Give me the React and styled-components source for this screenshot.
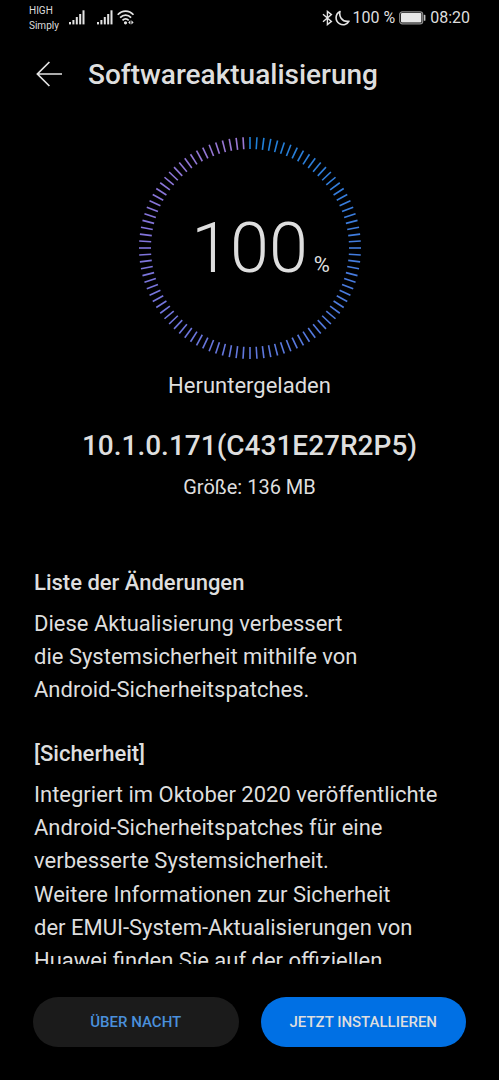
import styled, { createGlobalStyle } from "styled-components";

const COLORS = {
  background: "#000000",
  text: "#dedede",
  accent: "#4a90dc",
  primary: "#0070e4",
  secondary: "#1b1b1b",
};

const TICK_COUNT = 100;

const RING_STOPS = [
  { at: 0, rgb: [30, 128, 216] },
  { at: 0.25, rgb: [66, 124, 222] },
  { at: 0.5, rgb: [96, 120, 222] },
  { at: 0.75, rgb: [128, 116, 220] },
  { at: 1, rgb: [156, 120, 210] },
];

const getTickColor = (position) => {
  const next = RING_STOPS.findIndex((stop) => stop.at > position);
  const from = RING_STOPS[next - 1];
  const to = RING_STOPS[next];
  const ratio = (position - from.at) / (to.at - from.at);
  const rgb = from.rgb.map((value, i) => Math.round(value + (to.rgb[i] - value) * ratio));
  return `rgb(${rgb.join(",")})`;
};

const SignalIcon = () => (
  <svg
    width="16"
    height="15"
    viewBox="0 0 16 15"
    fill="#e4e4e4"
    aria-hidden="true"
  >
    <rect x="0" y="12" width="2" height="2.4" />
    <rect x="3.4" y="10" width="2" height="4.4" />
    <rect x="6.8" y="7" width="2" height="7.4" />
    <rect x="10.2" y="4" width="2" height="10.4" />
    <rect x="13.5" y="0.3" width="2" height="14.1" />
  </svg>
);

const WifiIcon = () => (
  <svg
    width="18"
    height="15"
    viewBox="0 0 18 15"
    fill="none"
    stroke="#e4e4e4"
    strokeWidth="1.7"
    aria-hidden="true"
  >
    <path d="M0.7 4.8C5.2 -0.2 12 -0.2 16.5 4.8" />
    <path d="M3.1 7.7C6.5 4.2 10.8 4.2 14.1 7.7" />
    <path d="M5.5 10.3C7.4 8.4 9.8 8.4 11.7 10.3" />
    <circle cx="8.5" cy="12.8" r="1.6" fill="#e4e4e4" stroke="none" />
    <path d="M13.4 10.2L11.2 12.4L13.4 14.6ZM14.4 10.2L16.6 12.4L14.4 14.6Z" fill="#e4e4e4" stroke="none" />
  </svg>
);

const BluetoothIcon = () => (
  <svg
    width="11"
    height="16"
    viewBox="0 0 11 16"
    fill="none"
    stroke="#e4e4e4"
    strokeWidth="1.4"
    aria-hidden="true"
  >
    <path d="M1 4.2L9.4 11.4L5.4 14.6V1.4L9.4 4.6L1 11.8" />
  </svg>
);

const MoonIcon = () => (
  <svg
    width="15"
    height="16"
    viewBox="0 0 15 16"
    fill="none"
    stroke="#e4e4e4"
    strokeWidth="1.6"
    strokeLinejoin="round"
    aria-hidden="true"
  >
    <path d="M5 1.5C-0.2 4.3 0 11 4.4 13.6C8.2 15.8 12.4 14.4 14 11.2C11 11.8 7.8 10.6 6.1 8.2C4.7 6.2 4.4 3.8 5 1.5Z" />
  </svg>
);

const BatteryIcon = () => (
  <svg
    width="27"
    height="14"
    viewBox="0 0 27 14"
    aria-hidden="true"
  >
    <rect x="0.7" y="0.8" width="23" height="12" rx="2.6" fill="none" stroke="#8c8c8c" strokeWidth="1.2" />
    <rect x="2" y="2" width="20.4" height="9.6" rx="1" fill="#e8e8e8" />
    <rect x="24.8" y="3.8" width="1.6" height="6" rx="0.6" fill="#c0c0c0" />
  </svg>
);

const BackIcon = () => (
  <svg
    width="26"
    height="26"
    viewBox="0 0 26 26"
    fill="none"
    stroke="#e4e4e4"
    strokeWidth="1.7"
    aria-hidden="true"
  >
    <path d="M13.4 1L1.4 13L13.4 25M1.4 13H26" />
  </svg>
);

const ProgressRing = ({ percent }) => (
  <Ring>
    <RingTicks
      viewBox="-112 -112 224 224"
      aria-hidden="true"
    >
      {Array.from({ length: TICK_COUNT }, (_, i) => (
        <line
          key={i}
          y1="-111"
          y2="-99"
          stroke={getTickColor(i / TICK_COUNT)}
          strokeWidth="1.6"
          transform={`rotate(${(i * 360) / TICK_COUNT})`}
        />
      ))}
    </RingTicks>
    <RingLabel>
      <Percent>{percent}</Percent>
      <Unit>%</Unit>
    </RingLabel>
  </Ring>
);

const App = () => (
  <>
    <GlobalStyle />
    <Screen>
      <StatusBar>
        <StatusGroup>
          <Carrier>
            <div>HIGH</div>
            <div>Simply</div>
          </Carrier>
          <Signals>
            <SignalIcon />
            <SignalPair>
              <SignalIcon />
              <WifiIcon />
            </SignalPair>
          </Signals>
        </StatusGroup>
        <StatusGroup>
          <StatusIcons>
            <BluetoothIcon />
            <MoonIcon />
            <span>100 %</span>
          </StatusIcons>
          <BatteryIcon />
          <span>08:20</span>
        </StatusGroup>
      </StatusBar>

      <Header>
        <BackButton aria-label="Zurück">
          <BackIcon />
        </BackButton>
        <Title>Softwareaktualisierung</Title>
      </Header>

      <Content>
        <Summary>
          <ProgressRing percent={100} />
          <State>Heruntergeladen</State>
          <Version>10.1.0.171(C431E27R2P5)</Version>
          <FileSize>Größe: 136 MB</FileSize>
        </Summary>

        <Changelog>
          <section>
            <SectionTitle>Liste der Änderungen</SectionTitle>
            <Paragraph>
              Diese Aktualisierung verbessert
              <br />
              die Systemsicherheit mithilfe von
              <br />
              Android-Sicherheitspatches.
            </Paragraph>
          </section>

          <section>
            <SectionTitle>[Sicherheit]</SectionTitle>
            <Paragraph>
              Integriert im Oktober 2020 veröffentlichte
              <br />
              Android-Sicherheitspatches für eine
              <br />
              verbesserte Systemsicherheit.
            </Paragraph>
            <Paragraph>
              Weitere Informationen zur Sicherheit
              <br />
              der EMUI-System-Aktualisierungen von
              <br />
              Huawei finden Sie auf der offiziellen
            </Paragraph>
          </section>
        </Changelog>
      </Content>

      <Actions>
        <ActionButton>ÜBER NACHT</ActionButton>
        <ActionButton $primary>JETZT INSTALLIEREN</ActionButton>
      </Actions>
    </Screen>
  </>
);

const GlobalStyle = createGlobalStyle`
  *, *::before, *::after {
    box-sizing: border-box;
  }

  body {
    margin: 0;
    background-color: ${COLORS.background};
    color: ${COLORS.text};
    font-family: Roboto, "Liberation Sans", sans-serif;
  }

  svg {
    display: block;
    flex-shrink: 0;
  }

  h1, h2, p {
    margin: 0;
  }
`;

const Screen = styled.div`
  display: flex;
  flex-direction: column;
  height: 100vh;
`;

const StatusBar = styled.div`
  display: flex;
  align-items: center;
  justify-content: space-between;
  height: 35px;
  padding: 0 29px;
  font-size: 16px;
`;

const StatusGroup = styled.div`
  display: flex;
  align-items: center;
  gap: 4px;
`;

const StatusIcons = styled.div`
  display: flex;
  align-items: center;
  gap: 2px;
`;

const Carrier = styled.div`
  width: 36px;
  font-size: 10px;
  line-height: 15px;
`;

const Signals = styled.div`
  display: flex;
  gap: 12px;
`;

const SignalPair = styled.div`
  display: flex;
  gap: 4px;
`;

const Header = styled.header`
  display: flex;
  align-items: center;
  gap: 26px;
  height: 78px;
  padding: 0 36px;
`;

const BackButton = styled.button`
  padding: 0;
  border: none;
  background: none;
  cursor: pointer;
`;

const Title = styled.h1`
  font-size: 28px;
  font-weight: 500;
`;

const Content = styled.main`
  flex: 1;
  min-height: 0;
  overflow: hidden;
  padding: 23px 34px 0;
`;

const Summary = styled.div`
  display: flex;
  flex-direction: column;
  align-items: center;
`;

const Ring = styled.div`
  display: grid;
  align-items: center;
  width: 224px;
  height: 224px;

  & > * {
    grid-area: 1 / 1;
  }
`;

const RingTicks = styled.svg`
  width: 100%;
  height: 100%;
`;

const RingLabel = styled.div`
  display: grid;
  grid-template-columns: 1fr auto 1fr;
  align-items: baseline;
`;

const Percent = styled.span`
  grid-column: 2;
  font-size: 70px;
  font-weight: 300;
  line-height: 80px;
`;

const Unit = styled.span`
  padding-left: 6px;
  font-size: 22px;
`;

const State = styled.div`
  margin-top: 9px;
  font-size: 22px;
  line-height: 33px;
`;

const Version = styled.div`
  margin-top: 25px;
  font-size: 28px;
  font-weight: 500;
  line-height: 38px;
`;

const FileSize = styled.div`
  margin-top: 6px;
  font-size: 20px;
  line-height: 33px;
`;

const Changelog = styled.div`
  display: flex;
  flex-direction: column;
  gap: 31px;
  margin-top: 62px;
`;

const SectionTitle = styled.h2`
  margin-bottom: 8px;
  font-size: 22px;
  font-weight: 500;
  line-height: 33px;
`;

const Paragraph = styled.p`
  font-size: 22px;
  line-height: 33px;

  & + & {
    margin-top: 1px;
  }
`;

const Actions = styled.footer`
  display: grid;
  grid-template-columns: 1fr 1fr;
  gap: 22px;
  padding: 33px;
`;

const ActionButton = styled.button`
  height: 50px;
  border: none;
  border-radius: 25px;
  background-color: ${({ $primary }) => ($primary ? COLORS.primary : COLORS.secondary)};
  color: ${({ $primary }) => ($primary ? COLORS.text : COLORS.accent)};
  font-family: inherit;
  font-size: 15px;
  font-weight: 500;
  cursor: pointer;
`;

export default App;
